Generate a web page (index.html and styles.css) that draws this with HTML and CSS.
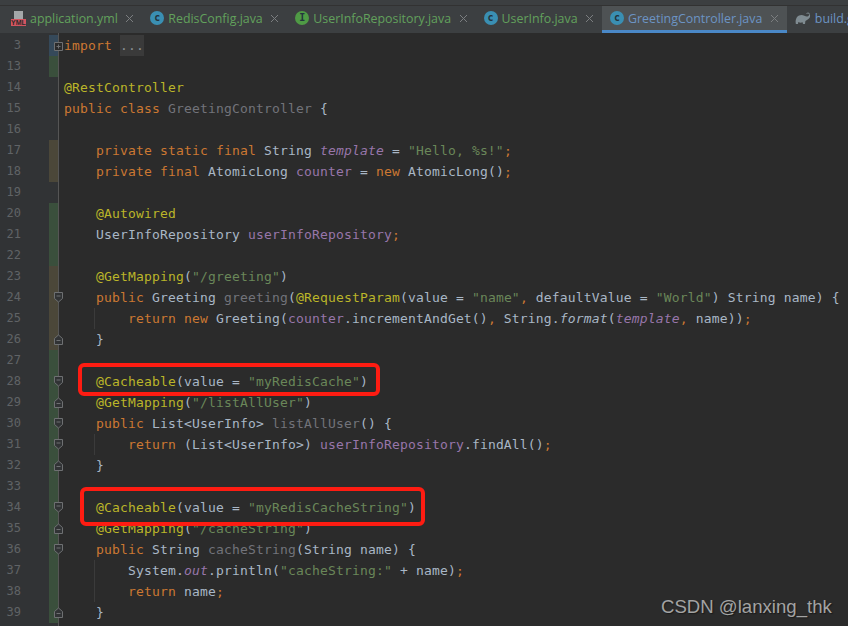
FILE: index.html
```html
<!DOCTYPE html>
<html lang="en">
<head>
    <meta charset="UTF-8">
    <meta name="viewport" content="width=device-width, initial-scale=1.0">
    <title>GreetingController.java</title>
    <link rel="stylesheet" href="styles.css">
</head>
<body>
    <svg class="defs" width="0" height="0">
        <symbol id="close" viewBox="0 0 9 9"><path d="M1 1l7 7M8 1l-7 7" fill="none" stroke="#7b7e80" stroke-width="1"/></symbol>
        <symbol id="fold-plus" viewBox="0 0 9 9"><path d="M.5.5h8v8h-8zM2.5 4.5h4M4.5 2.5v4" fill="#2b2b2b" stroke="#6e7072"/></symbol>
        <symbol id="fold-top" viewBox="0 0 9 11"><path d="M.5.5h8v6l-4 3.500-4-3.500zM2.500 4h4" fill="#313335" stroke="#6e7072"/></symbol>
        <symbol id="fold-end" viewBox="0 0 9 11"><path d="M.5 10.500h8v-6l-4-3.500-4 3.500zM2.500 6.500h4" fill="#313335" stroke="#6e7072"/></symbol>
    </svg>

    <div class="top-strip"></div>
    <div class="tabs">
        <div class="tab">
            <span class="yml-icon"><span class="yml-page"></span><span class="yml-label">YML</span></span>
            <span class="tab-name changed">application.yml</span>
            <svg class="tab-close"><use href="#close"/></svg>
        </div>
        <div class="tab">
            <span class="round-icon class-icon">c</span>
            <span class="tab-name changed">RedisConfig.java</span>
            <svg class="tab-close"><use href="#close"/></svg>
        </div>
        <div class="tab">
            <span class="round-icon iface-icon">I</span>
            <span class="tab-name changed">UserInfoRepository.java</span>
            <svg class="tab-close"><use href="#close"/></svg>
        </div>
        <div class="tab">
            <span class="round-icon class-icon">c</span>
            <span class="tab-name changed">UserInfo.java</span>
            <svg class="tab-close"><use href="#close"/></svg>
        </div>
        <div class="tab active">
            <span class="round-icon class-icon">c</span>
            <span class="tab-name edited">GreetingController.java</span>
            <svg class="tab-close"><use href="#close"/></svg>
        </div>
        <div class="tab">
            <svg class="gradle-icon" viewBox="0 0 16 12"><path d="M14.500 1.200c-1-.9-2.300-.7-3 .1-.3.400 0 .8.400.6.700-.5 1.400-.4 1.900.1.500.6.300 1.500-.7 2.200C11 5.300 9 3 6.500 3 3 3 .8 5.800.6 9.500c0 .9.100 1.800.300 2.500h2.100l.3-1.900c1.500.7 3 .7 4.300.2l.4 1.700h2l.4-3c1-.5 2.200-1.300 3.300-2.300 1.500-1.400 1.900-3.200.8-4.500z" fill="#7f8b91"/></svg>
            <span class="tab-name edited">build.gradle</span>
        </div>
    </div>

    <div class="editor">
        <div class="row"><span class="num">3</span><span class="mark mark-new"></span><svg class="fold box"><use href="#fold-plus"/></svg><code><i class="kw">import</i> <span class="folded">...</span></code></div>
        <div class="row"><span class="num">13</span><span class="mark mark-add"></span><code></code></div>
        <div class="row"><span class="num">14</span><span class="mark"></span><code><i class="an">@RestController</i></code></div>
        <div class="row"><span class="num">15</span><span class="mark"></span><code><i class="kw">public class</i> <i class="dim">GreetingController</i> {</code></div>
        <div class="row"><span class="num">16</span><span class="mark"></span><code></code></div>
        <div class="row"><span class="num">17</span><span class="mark mark-edit"></span><code class="in1"><i class="kw">private static final</i> String <i class="fd it">template</i> = <i class="st">"Hello, %s!"</i><i class="kw">;</i></code></div>
        <div class="row"><span class="num">18</span><span class="mark mark-edit"></span><code class="in1"><i class="kw">private final</i> AtomicLong <i class="fd">counter</i> = <i class="kw">new</i> AtomicLong()<i class="kw">;</i></code></div>
        <div class="row"><span class="num">19</span><span class="mark"></span><code></code></div>
        <div class="row"><span class="num">20</span><span class="mark mark-add"></span><code class="in1"><i class="an">@Autowired</i></code></div>
        <div class="row"><span class="num">21</span><span class="mark mark-add"></span><code class="in1">UserInfoRepository <i class="fd">userInfoRepository</i><i class="kw">;</i></code></div>
        <div class="row"><span class="num">22</span><span class="mark mark-add"></span><code></code></div>
        <div class="row"><span class="num">23</span><span class="mark mark-edit"></span><code class="in1"><i class="an">@GetMapping</i>(<i class="st">"/greeting"</i>)</code></div>
        <div class="row"><span class="num">24</span><span class="mark mark-edit"></span><svg class="fold"><use href="#fold-top"/></svg><code class="in1"><i class="kw">public</i> Greeting <i class="dim">greeting</i>(<i class="an">@RequestParam</i>(value = <i class="st">"name"</i><i class="kw">,</i> defaultValue = <i class="st">"World"</i>) String name) {</code></div>
        <div class="row"><span class="num">25</span><span class="mark mark-edit"></span><code class="guide"><i class="kw">return new</i> Greeting(<i class="fd">counter</i>.incrementAndGet()<i class="kw">,</i> String.<i class="it">format</i>(<i class="fd it">template</i><i class="kw">,</i> name))<i class="kw">;</i></code></div>
        <div class="row"><span class="num">26</span><span class="mark mark-edit"></span><svg class="fold"><use href="#fold-end"/></svg><code class="in1">}</code></div>
        <div class="row"><span class="num">27</span><span class="mark mark-add"></span><code></code></div>
        <div class="row"><span class="num">28</span><span class="mark mark-add"></span><svg class="fold"><use href="#fold-top"/></svg><code class="in1"><i class="an">@Cacheable</i>(value = <i class="st">"myRedisCache"</i>)</code></div>
        <div class="row"><span class="num">29</span><span class="mark mark-add"></span><svg class="fold"><use href="#fold-end"/></svg><code class="in1"><i class="an">@GetMapping</i>(<i class="st">"/listAllUser"</i>)</code></div>
        <div class="row"><span class="num">30</span><span class="mark mark-add"></span><svg class="fold"><use href="#fold-top"/></svg><code class="in1"><i class="kw">public</i> List&lt;UserInfo&gt; <i class="dim">listAllUser</i>() {</code></div>
        <div class="row"><span class="num">31</span><span class="mark mark-add"></span><svg class="fold"><use href="#fold-top"/></svg><code class="guide"><i class="kw">return</i> (List&lt;UserInfo&gt;) <i class="fd">userInfoRepository</i>.findAll()<i class="kw">;</i></code></div>
        <div class="row"><span class="num">32</span><span class="mark mark-add"></span><svg class="fold"><use href="#fold-end"/></svg><code class="in1">}</code></div>
        <div class="row"><span class="num">33</span><span class="mark mark-add"></span><code></code></div>
        <div class="row"><span class="num">34</span><span class="mark mark-add"></span><svg class="fold"><use href="#fold-top"/></svg><code class="in1"><i class="an">@Cacheable</i>(value = <i class="st">"myRedisCacheString"</i>)</code></div>
        <div class="row"><span class="num">35</span><span class="mark mark-add"></span><svg class="fold"><use href="#fold-end"/></svg><code class="in1"><i class="an">@GetMapping</i>(<i class="st">"/cacheString"</i>)</code></div>
        <div class="row"><span class="num">36</span><span class="mark mark-add"></span><svg class="fold"><use href="#fold-top"/></svg><code class="in1"><i class="kw">public</i> String <i class="dim">cacheString</i>(String name) {</code></div>
        <div class="row"><span class="num">37</span><span class="mark mark-add"></span><code class="guide">System.<i class="fd it">out</i>.println(<i class="st">"cacheString:"</i> + name)<i class="kw">;</i></code></div>
        <div class="row"><span class="num">38</span><span class="mark mark-add"></span><code class="guide"><i class="kw">return</i> name<i class="kw">;</i></code></div>
        <div class="row"><span class="num">39</span><span class="mark mark-add"></span><svg class="fold"><use href="#fold-end"/></svg><code class="in1">}</code></div>
    </div>

    <div class="callout callout-one"></div>
    <div class="callout callout-two"></div>
    <div class="watermark">CSDN @lanxing_thk</div>
</body>
</html>
```

FILE: styles.css
```css
body {
    margin: 0;
    height: 626px;
    overflow: hidden;
    background-color: #2b2b2b;
    position: relative;
}
.defs {
    position: absolute;
}
.top-strip {
    height: 5px;
    background-color: #3c3f41;
    border-bottom: 1px solid #323232;
}
.tabs {
    display: flex;
    height: 27px;
    background-color: #3c3f41;
    overflow: hidden;
}
.tab {
    display: flex;
    align-items: center;
    flex-shrink: 0;
    box-sizing: border-box;
    height: 27px;
    padding: 0 8px 3px;
    font-family: "Open Sans", sans-serif;
    font-size: 12.4px;
}
.tab.active {
    background-color: #4e5254;
    border-bottom: 3px solid #4a88c7;
    padding-bottom: 0;
}
.tab-name {
    margin-left: 4px;
    white-space: nowrap;
}
.changed {
    color: #62a15c;
}
.edited {
    color: #6c94c4;
}
.tab-close {
    width: 9px;
    height: 9px;
    margin-left: 7.5px;
}
.round-icon {
    width: 14px;
    height: 14px;
    border-radius: 50%;
    font-family: "DejaVu Sans Mono", monospace;
    font-size: 10px;
    font-weight: bold;
    line-height: 13px;
    text-align: center;
    color: #23343d;
}
.class-icon {
    background-color: #3a8fb3;
}
.iface-icon {
    background-color: #4f9a45;
}
.yml-icon {
    position: relative;
    width: 15px;
    height: 15px;
    margin-left: 3px;
}
.yml-page {
    position: absolute;
    left: 3px;
    top: 0;
    width: 9px;
    height: 8px;
    background-color: #a4a7a9;
}
.yml-label {
    position: absolute;
    left: 0;
    bottom: 0;
    width: 15px;
    height: 7px;
    background-color: #d3545f;
    color: #2b2b2b;
    font-family: "Liberation Sans", sans-serif;
    font-size: 7px;
    font-weight: bold;
    line-height: 7px;
    text-align: center;
}
.gradle-icon {
    width: 16px;
    height: 12px;
}

.editor {
    padding-top: 2px;
    background:
        linear-gradient(#555, #555) 58px 0 / 1px 100% no-repeat,
        linear-gradient(#313335, #313335) 0 0 / 49px 100% no-repeat,
        linear-gradient(#313335, #313335) 49px 0 / 9px 100% no-repeat;
    height: 591px;
}
.row {
    display: flex;
    height: 21px;
    position: relative;
}
.num {
    box-sizing: border-box;
    width: 49px;
    padding-right: 28px;
    text-align: right;
    font-family: "DejaVu Sans Mono", monospace;
    font-size: 12px;
    line-height: 21px;
    color: #606366;
}
.mark {
    width: 9px;
    flex-shrink: 0;
}
.mark-new {
    background-color: #35495a;
}
.mark-add {
    background-color: #3a4f3c;
}
.mark-edit {
    background-color: #4b4739;
}
.fold {
    position: absolute;
    left: 54px;
    top: 5px;
    width: 9px;
    height: 11px;
}
.fold.box {
    top: 7px;
    height: 9px;
}
code {
    display: block;
    margin-left: 6px;
    white-space: pre;
    font-family: "DejaVu Sans Mono", monospace;
    font-size: 13px;
    letter-spacing: 0.17px;
    line-height: 21px;
    color: #a9b7c6;
}
code i {
    font-style: normal;
}
.in1 {
    padding-left: 32px;
}
.guide {
    margin-left: 36px;
    padding-left: 33px;
    border-left: 1px solid #3b3b3b;
}
.kw {
    color: #cc7832;
}
.an {
    color: #bbb529;
}
.st {
    color: #6a8759;
}
.fd {
    color: #9876aa;
}
.dim {
    color: #72737a;
}
code .it {
    font-style: italic;
}
.folded {
    background-color: #3a3a3a;
    color: #8a8f94;
    display: inline-block;
}

.callout {
    position: absolute;
    box-sizing: border-box;
    border: 4px solid #fe1c12;
    border-radius: 6px;
}
.callout-one {
    left: 78px;
    top: 363px;
    width: 302px;
    height: 33px;
}
.callout-two {
    left: 80px;
    top: 487px;
    width: 345px;
    height: 39px;
}
.watermark {
    position: absolute;
    left: 661px;
    top: 596px;
    font-family: "Liberation Sans", sans-serif;
    font-size: 18.6px;
    color: #a3a3a3;
    text-shadow: 1px 1px 1px #1a1a1a;
}
```
